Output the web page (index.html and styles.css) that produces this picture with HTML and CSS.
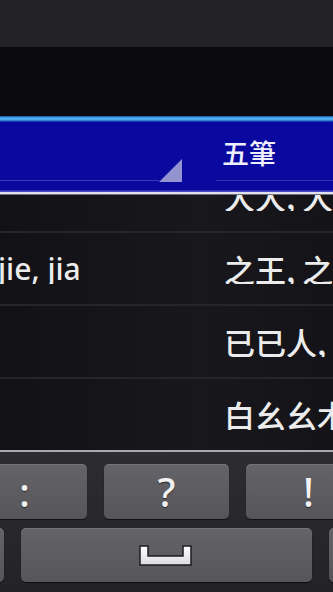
FILE: index.html
```html
<!DOCTYPE html>
<html lang="zh-Hant">
<head>
<meta charset="utf-8">
<title>五筆</title>
<link rel="stylesheet" href="styles.css">
</head>
<body>
<div class="screen">
  <div class="status"></div>
  <div class="titlebar"></div>
  <div class="tabbar">
    <div class="tabbar-top"></div>
    <div class="tabs">
      <div class="tab tab-left">
        <div class="tab-line"></div>
        <svg class="corner" width="23" height="23" viewBox="0 0 23 23"><path d="M23 0V23H0Z" fill="#9393cf"/></svg>
      </div>
      <div class="tab tab-right">
        <span class="tab-label">五筆</span>
        <div class="tab-line"></div>
      </div>
    </div>
    <div class="tabbar-bottom"></div>
  </div>
  <div class="list">
    <div class="row row-first">
      <div class="cell-left"></div>
      <div class="cell-right">大大, 大大</div>
    </div>
    <div class="row">
      <div class="cell-left">jie, jia</div>
      <div class="cell-right">之王, 之王</div>
    </div>
    <div class="row">
      <div class="cell-left"></div>
      <div class="cell-right">已已人, 已</div>
    </div>
    <div class="row">
      <div class="cell-left"></div>
      <div class="cell-right">白幺幺木</div>
    </div>
  </div>
  <div class="keyboard">
    <div class="kb-row kb-row-1">
      <div class="key">:</div>
      <div class="key">?</div>
      <div class="key">!</div>
    </div>
    <div class="kb-row kb-row-2">
      <div class="key key-side"></div>
      <div class="key key-space">
        <svg class="space-icon" width="55" height="23" viewBox="0 0 55 23">
          <defs>
            <linearGradient id="sp" x1="0" y1="0" x2="0" y2="1">
              <stop offset="0" stop-color="#ffffff"/>
              <stop offset="1" stop-color="#dcdce0"/>
            </linearGradient>
          </defs>
          <path d="M2 2H10V12H45V2H53V21H2Z" fill="url(#sp)" stroke="#1c1c20" stroke-width="1.5" stroke-linejoin="miter"/>
        </svg>
      </div>
      <div class="key key-side"></div>
    </div>
  </div>
</div>
</body>
</html>
```

FILE: styles.css
```css
html, body {
  margin: 0;
  padding: 0;
  background: #141418;
}

.screen {
  width: 333px;
  height: 592px;
  overflow: hidden;
  display: flex;
  flex-direction: column;
  font-family: "Noto Sans", "Noto Sans CJK TC", "Noto Sans CJK SC", sans-serif;
}

.status {
  height: 47px;
  flex-shrink: 0;
  background: #232326;
}

.titlebar {
  height: 69px;
  flex-shrink: 0;
  background: #0b0a0e;
}

.tabbar {
  flex-shrink: 0;
  display: flex;
  flex-direction: column;
}

.tabbar-top {
  height: 6px;
  background: linear-gradient(#1d63a6 0, #1d63a6 1px, #3a92de 1px, #56aef2 3px, #4aa2ea 4px, #1f5cc0 5px, #0c1aa8 6px);
}

.tabs {
  height: 68px;
  display: flex;
  background: #0909a0;
}

.tab-left {
  width: 182px;
  flex-shrink: 0;
  display: flex;
  align-items: flex-end;
  padding-bottom: 8px;
  box-sizing: border-box;
}

.tab-left .tab-line {
  flex: 1;
  height: 1px;
  margin-bottom: 1px;
  background: #3a3ab6;
}

.corner {
  display: block;
  flex-shrink: 0;
}

.tab-right {
  flex: 1;
  margin-left: 34px;
  display: flex;
  flex-direction: column;
  padding-top: 17px;
  box-sizing: border-box;
}

.tab-label {
  font-family: "Noto Sans CJK TC", "Noto Sans CJK SC", sans-serif;
  font-size: 27px;
  font-weight: 500;
  line-height: 27px;
  padding-left: 6px;
  color: #eeeefc;
}

.tab-right .tab-line {
  margin-top: auto;
  margin-bottom: 9px;
  height: 1px;
  background: #3434b2;
}

.tabbar-bottom {
  height: 5px;
  background: linear-gradient(#2626b4 0, #5050c4 2px, #dcdcea 2px, #e6e6f0 4px, #6e6e7c 4px);
}

.list {
  height: 255px;
  flex-shrink: 0;
  overflow: hidden;
  background: linear-gradient(90deg, #121216, #17171c 60%, #141418);
}

.row {
  height: 71px;
  border-bottom: 2px solid #25252b;
  display: flex;
  align-items: center;
  color: #ececec;
  white-space: nowrap;
}

.row-first {
  margin-top: -35px;
}

.cell-left {
  width: 226px;
  flex-shrink: 0;
  font-size: 30px;
  font-weight: 500;
  line-height: 1;
  margin-left: -2px;
  overflow: hidden;
}

.cell-right {
  flex: 1;
  font-family: "Noto Sans CJK SC", "Noto Sans CJK TC", sans-serif;
  font-size: 31px;
  font-weight: 500;
  line-height: 1;
  overflow: hidden;
}

.keyboard {
  flex: 1;
  border-top: 2px solid #a9a9b2;
  background: linear-gradient(#2c2c31, #222227);
  padding-top: 12px;
  display: flex;
  flex-direction: column;
  gap: 9px;
  overflow: hidden;
}

.kb-row {
  display: flex;
  gap: 17px;
}

.kb-row-1 {
  height: 55px;
  margin-left: -38px;
}

.kb-row-2 {
  height: 54px;
  margin-left: -96px;
}

.key {
  width: 125px;
  flex-shrink: 0;
  border-radius: 5px;
  background: linear-gradient(#646468, #56565a);
  box-shadow: inset 0 1px 0 rgba(255, 255, 255, 0.12), 0 1px 1px rgba(0, 0, 0, 0.6);
  display: flex;
  align-items: center;
  justify-content: center;
  font-size: 40px;
  font-weight: 500;
  line-height: 1;
  color: #f2f2f2;
  text-shadow: 0 1px 1px rgba(0, 0, 0, 0.6);
}

.key-side {
  width: 100px;
}

.key-space {
  width: 291px;
}

.space-icon {
  display: block;
  margin-left: -2px;
}
```
